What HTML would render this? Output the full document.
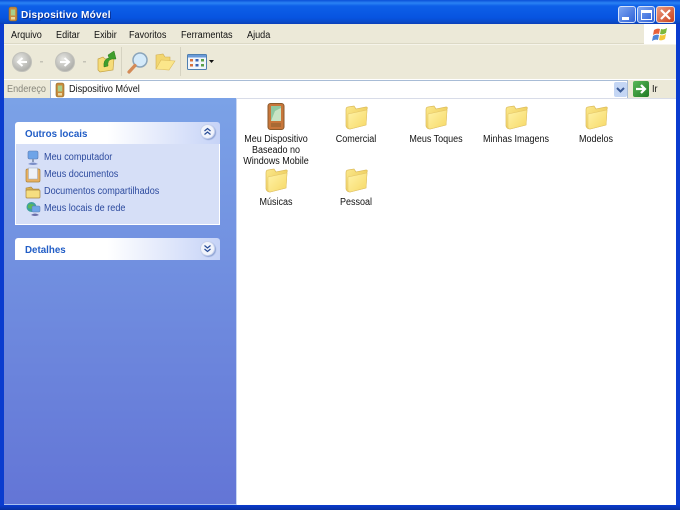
<!DOCTYPE html>
<html><head><meta charset="utf-8"><style>
*{box-sizing:border-box;margin:0;padding:0}
html,body{width:680px;height:510px;overflow:hidden;background:#0a3ccf}
body{position:relative;font-family:"Liberation Sans",sans-serif;font-size:10px;color:#111;filter:blur(.3px)}
.a,.t{position:absolute}
.t{white-space:nowrap;line-height:12px;transform:scaleX(.91);transform-origin:left center}
.c{text-align:center;transform:translateX(-50%) scaleX(.9);transform-origin:center}
.lnk{color:#2c4a9e;left:44px}
.h{color:#215dc6;font-weight:bold;font-size:10.5px;transform:scaleX(.93)}
svg{position:absolute;overflow:visible}
</style></head><body>
<svg width="0" height="0" style="position:absolute"><defs>
<linearGradient id="fo" x1="0" y1="0" x2="1" y2="1"><stop offset="0" stop-color="#fbe98e"/><stop offset="1" stop-color="#e8bf44"/></linearGradient>
<linearGradient id="fo2" x1="0" y1="0" x2="1" y2="1"><stop offset="0" stop-color="#fff3a8"/><stop offset="1" stop-color="#f6d866"/></linearGradient>
<g id="folder"><path d="M2 5 Q2 2 4 2 L10 1 L12 4 L22 2 Q24 2 23 4 L22 20 L6 24 Q3 24 2 21Z" fill="url(#fo)" stroke="#dcbc5c" stroke-width=".7"/><path d="M4 9 L23 5 L22 20 L6 24 Q4 24 4 22Z" fill="url(#fo2)" stroke="#e2c468" stroke-width=".5"/></g>
<g id="dev"><rect x="1" y="0" width="8" height="14" rx="2" fill="#c98a3d" stroke="#8a6a2a" stroke-width=".6"/><rect x="2.8" y="2.5" width="4.4" height="6" fill="#a9cf8b"/><rect x="3" y="10" width="4" height="2.5" fill="#e8d9a0"/></g>
</defs></svg>

<div class="a" style="left:0;top:0;width:680px;height:24px;background:linear-gradient(#0a4fd8 0,#2a83f4 3px,#0d5fe8 6px,#0753e0 18px,#0a4bc8 22px,#0a3eb8 24px)"></div>
<svg style="left:8px;top:7px" width="10" height="14"><use href="#dev"/></svg>
<div class="t" style="left:21px;top:9px;color:#fff;font-weight:bold;font-size:10.5px;letter-spacing:.25px;text-shadow:1px 1px 0 #0a2f90;transform:scaleX(.96)">Dispositivo Móvel</div>

<div class="a" style="left:618px;top:6px;width:18px;height:17px;border:1px solid #d5e2fa;border-radius:3px;background:linear-gradient(135deg,#7ea6f0,#2f62d8)"><div class="a" style="left:3px;top:10px;width:7px;height:3px;background:#fff"></div></div>
<div class="a" style="left:637px;top:6px;width:18px;height:17px;border:1px solid #d5e2fa;border-radius:3px;background:linear-gradient(135deg,#7ea6f0,#2f62d8)"><div class="a" style="left:3px;top:3px;width:11px;height:10px;border:1px solid #fff;border-top-width:3px"></div></div>
<div class="a" style="left:656px;top:6px;width:19px;height:17px;border:1px solid #e8dcd8;border-radius:3px;background:linear-gradient(135deg,#ec9a80,#c8401c)"></div>
<svg style="left:656px;top:6px" width="19" height="17"><path d="M5 4 L14 13 M14 4 L5 13" stroke="#fff" stroke-width="2.2"/></svg>

<div class="a" style="left:0;top:24px;width:4px;height:486px;background:#0a3ccf"></div>
<div class="a" style="right:0;top:24px;width:4px;height:486px;background:#0a3ccf"></div>
<div class="a" style="left:0;top:505px;width:680px;height:5px;background:linear-gradient(#0a3ccf,#08309f)"></div>

<div class="a" style="left:4px;top:24px;width:672px;height:74px;background:#ece9d8"></div>
<div class="a" style="left:4px;top:43px;width:640px;height:1px;background:#dcd9c6"></div>
<div class="a" style="left:4px;top:44px;width:672px;height:1px;background:#f6f4ea"></div>
<div class="a" style="left:644px;top:24px;width:32px;height:20px;background:#fff"></div>
<svg style="left:652px;top:26px" width="18" height="16"><path d="M2 4 Q5 2 8 3 L7 8 Q4 7 1 9Z" fill="#e8623a"/><path d="M9 3 Q12 4 15 2 L14 7 Q11 9 8 8Z" fill="#7cb83c"/><path d="M1 10 Q4 8 7 9 L6 14 Q3 13 0 15Z" fill="#4f86d8"/><path d="M8 9 Q11 10 14 8 L13 13 Q10 15 7 14Z" fill="#f4c838"/></svg>

<div class="t" style="left:11px;top:29.5px">Arquivo</div>
<div class="t" style="left:56px;top:29.5px">Editar</div>
<div class="t" style="left:94px;top:29.5px">Exibir</div>
<div class="t" style="left:129px;top:29.5px">Favoritos</div>
<div class="t" style="left:181px;top:29.5px">Ferramentas</div>
<div class="t" style="left:247px;top:29.5px">Ajuda</div>

<svg style="left:12px;top:52px" width="80" height="20">
<defs><radialGradient id="gb" cx=".4" cy=".35" r=".7"><stop offset="0" stop-color="#e8e8e4"/><stop offset="1" stop-color="#a8a8a4"/></radialGradient></defs>
<circle cx="10" cy="10" r="9.5" fill="url(#gb)" stroke="#c0c0ba"/><path d="M15 10 H7 M10.5 6 L6 10 L10.5 14" fill="none" stroke="#fff" stroke-width="2"/>
<rect x="28" y="9" width="3" height="1.5" fill="#c4c2b6"/>
<circle cx="53" cy="10" r="9.5" fill="url(#gb)" stroke="#c0c0ba"/><path d="M48 10 H56 M52.5 6 L57 10 L52.5 14" fill="none" stroke="#fff" stroke-width="2"/>
<rect x="71" y="9" width="3" height="1.5" fill="#c4c2b6"/>
</svg>
<svg style="left:97px;top:50px" width="20" height="24"><path d="M1 9 L6 7 L8 9 L17 8 L16 20 L3 22 L1 20Z" fill="#f6dc78" stroke="#c6a445" stroke-width=".7"/><path d="M7 17 Q6 9 12 8 L11 5 L17 1 L19 9 L15 9 Q10 10 11 16Z" fill="#3f9e2c" stroke="#2b7a1c" stroke-width=".5"/></svg>
<div class="a" style="left:121px;top:47px;width:1px;height:29px;background:#d6d3c2"></div>
<svg style="left:126px;top:51px" width="24" height="24"><circle cx="14" cy="9" r="7" fill="#d4eafa" stroke="#8aa4ba" stroke-width="1.5"/><path d="M9 14.5 L3 21" stroke="#d48a56" stroke-width="3.2" stroke-linecap="round"/></svg>
<svg style="left:155px;top:52px" width="20" height="20"><path d="M1 3 L8 2 L10 5 L15 5 L15 9 L1 17Z" fill="#f2d670" stroke="#d0ad52" stroke-width=".6"/><path d="M1 17 L14 18 L20 9 L6 8 Z" fill="#fbe68a" stroke="#dcbc5c" stroke-width=".6"/></svg>
<div class="a" style="left:180px;top:47px;width:1px;height:29px;background:#d6d3c2"></div>
<svg style="left:187px;top:54px" width="28" height="17"><rect x=".5" y=".5" width="19" height="15" rx="1" fill="#f2f6fb" stroke="#4f7fb0"/><rect x="1" y="1" width="18" height="2.5" fill="#6a9ad8"/><g fill="#d8703c"><rect x="3" y="5" width="3" height="2.5"/><rect x="3" y="10" width="3" height="2.5"/></g><g fill="#3a62b0"><rect x="8.5" y="5" width="3" height="2.5"/><rect x="8.5" y="10" width="3" height="2.5"/></g><g fill="#5aa048"><rect x="14" y="5" width="3" height="2.5"/><rect x="14" y="10" width="3" height="2.5"/></g><path d="M22 6 H27 L24.5 9Z" fill="#111"/></svg>

<div class="a" style="left:4px;top:79px;width:672px;height:1px;background:#fff"></div>
<div class="t" style="left:7px;top:84px;color:#86857a">Endereço</div>
<div class="a" style="left:50px;top:80px;width:578px;height:19px;background:#fff;border:1px solid #a8bcd6"></div>
<svg style="left:55px;top:83px" width="10" height="14"><use href="#dev"/></svg>
<div class="t" style="left:69px;top:84px">Dispositivo Móvel</div>
<div class="a" style="left:614px;top:82px;width:13px;height:15px;border-radius:2px;background:#c4d6f4"></div>
<svg style="left:614px;top:82px" width="13" height="15"><path d="M3 6 L6.5 9.5 L10 6" fill="none" stroke="#3a5a96" stroke-width="2"/></svg>
<div class="a" style="left:633px;top:81px;width:16px;height:16px;border-radius:2px;background:linear-gradient(135deg,#5ab85a,#1f7a24)"></div>
<svg style="left:633px;top:81px" width="16" height="16"><path d="M3 8 H11 M8 4 L12 8 L8 12" fill="none" stroke="#fff" stroke-width="2.2"/></svg>
<div class="t" style="left:652px;top:84px">Ir</div>

<div class="a" style="left:4px;top:98px;width:232px;height:407px;background:linear-gradient(#7ba2e7,#6375d6)"></div>
<div class="a" style="left:4px;top:500px;width:232px;height:5px;border-bottom:1px solid #a8c0f0"></div>
<div class="a" style="left:236px;top:98px;width:440px;height:407px;background:#fff;border-left:1px solid #c8d6f2;border-top:1px solid #d8dce8"></div>

<div class="a" style="left:15px;top:122px;width:205px;height:22px;border-radius:3px 3px 0 0;background:linear-gradient(90deg,#fff 0,#fff 45%,#c6d3f7 100%)"></div>
<div class="a" style="left:15px;top:144px;width:205px;height:81px;background:#d6dff7;border:1px solid #fff;border-top:0"></div>
<div class="t h" style="left:25px;top:127.5px">Outros locais</div>
<div class="a" style="left:200px;top:124px;width:15px;height:15px;border-radius:50%;background:#f0f3fb;border:1px solid #c8d2ec;box-shadow:1px 1px 1px #8fa4d4"></div>
<svg style="left:200px;top:124px" width="15" height="15"><path d="M4.5 7 L7.5 4.5 L10.5 7 M4.5 10.5 L7.5 8 L10.5 10.5" fill="none" stroke="#254a96" stroke-width="1.2"/></svg>

<svg style="left:25px;top:150px" width="16" height="16"><rect x="3" y="1" width="10" height="8" rx="1.5" fill="#6ea4e8" stroke="#5a7ab0" stroke-width=".6"/><path d="M8 9 V12" stroke="#8a9ab8" stroke-width="2"/><path d="M3 14 Q8 11 13 14 Q8 16 3 14Z" fill="#7a8ec8"/></svg>
<svg style="left:25px;top:167px" width="16" height="16"><rect x="1" y="2" width="14" height="13" rx="1.5" fill="#e8b060" stroke="#a8843e" stroke-width=".7"/><rect x="3.5" y="1" width="9" height="11" fill="#eef2f8" stroke="#9aa8c0" stroke-width=".5"/></svg>
<svg style="left:25px;top:185px" width="16" height="14"><path d="M1 3 L6 2 L8 4 L14 4 L14 6 L1 6Z" fill="#d8b050" stroke="#a8843e" stroke-width=".6"/><rect x="1" y="5" width="14" height="8" rx="1" fill="#f6de80" stroke="#a8843e" stroke-width=".7"/></svg>
<svg style="left:25px;top:201px" width="16" height="16"><circle cx="6.5" cy="6" r="5" fill="#3fa0a0"/><path d="M3 4 Q6 2 9 4 L7 8 L3 7Z" fill="#5ab85a"/><rect x="7" y="5" width="8" height="6" rx="1" fill="#6ea4e8" stroke="#5a7ab0" stroke-width=".5"/><path d="M6 14 Q10 11 14 14 Q10 16 6 14Z" fill="#6a6ea8"/></svg>
<div class="t lnk" style="top:151.5px">Meu computador</div>
<div class="t lnk" style="top:168.5px">Meus documentos</div>
<div class="t lnk" style="top:185.5px">Documentos compartilhados</div>
<div class="t lnk" style="top:202.5px">Meus locais de rede</div>

<div class="a" style="left:15px;top:238px;width:205px;height:22px;border-radius:3px 3px 0 0;background:linear-gradient(90deg,#fff 0,#fff 45%,#c6d3f7 100%)"></div>
<div class="t h" style="left:25px;top:243.5px">Detalhes</div>
<div class="a" style="left:200px;top:241px;width:15px;height:15px;border-radius:50%;background:#f0f3fb;border:1px solid #c8d2ec;box-shadow:1px 1px 1px #8fa4d4"></div>
<svg style="left:200px;top:241px" width="15" height="15"><path d="M4.5 4.5 L7.5 7 L10.5 4.5 M4.5 8 L7.5 10.5 L10.5 8" fill="none" stroke="#254a96" stroke-width="1.2"/></svg>

<svg style="left:267px;top:103px" width="18" height="28"><rect x="1" y=".5" width="16" height="26" rx="2.5" fill="#c8763a" stroke="#8a5a2c"/><rect x="4" y="3" width="10" height="15" fill="#8fc8a0"/><path d="M4 18 L8 8 L14 5 V18Z" fill="#c8e4c4"/><rect x="4" y="20" width="10" height="4" fill="#a86a34"/></svg>
<svg style="left:344px;top:105px" width="24" height="25"><use href="#folder"/></svg>
<svg style="left:424px;top:105px" width="24" height="25"><use href="#folder"/></svg>
<svg style="left:504px;top:105px" width="24" height="25"><use href="#folder"/></svg>
<svg style="left:584px;top:105px" width="24" height="25"><use href="#folder"/></svg>
<svg style="left:264px;top:168px" width="24" height="25"><use href="#folder"/></svg>
<svg style="left:344px;top:168px" width="24" height="25"><use href="#folder"/></svg>

<div class="t c" style="left:276px;top:134px;line-height:11px">Meu Dispositivo<br>Baseado no<br>Windows Mobile</div>
<div class="t c" style="left:356px;top:134px">Comercial</div>
<div class="t c" style="left:436px;top:134px">Meus Toques</div>
<div class="t c" style="left:516px;top:134px">Minhas Imagens</div>
<div class="t c" style="left:596px;top:134px">Modelos</div>
<div class="t c" style="left:276px;top:197px">Músicas</div>
<div class="t c" style="left:356px;top:197px">Pessoal</div>
</body></html>
